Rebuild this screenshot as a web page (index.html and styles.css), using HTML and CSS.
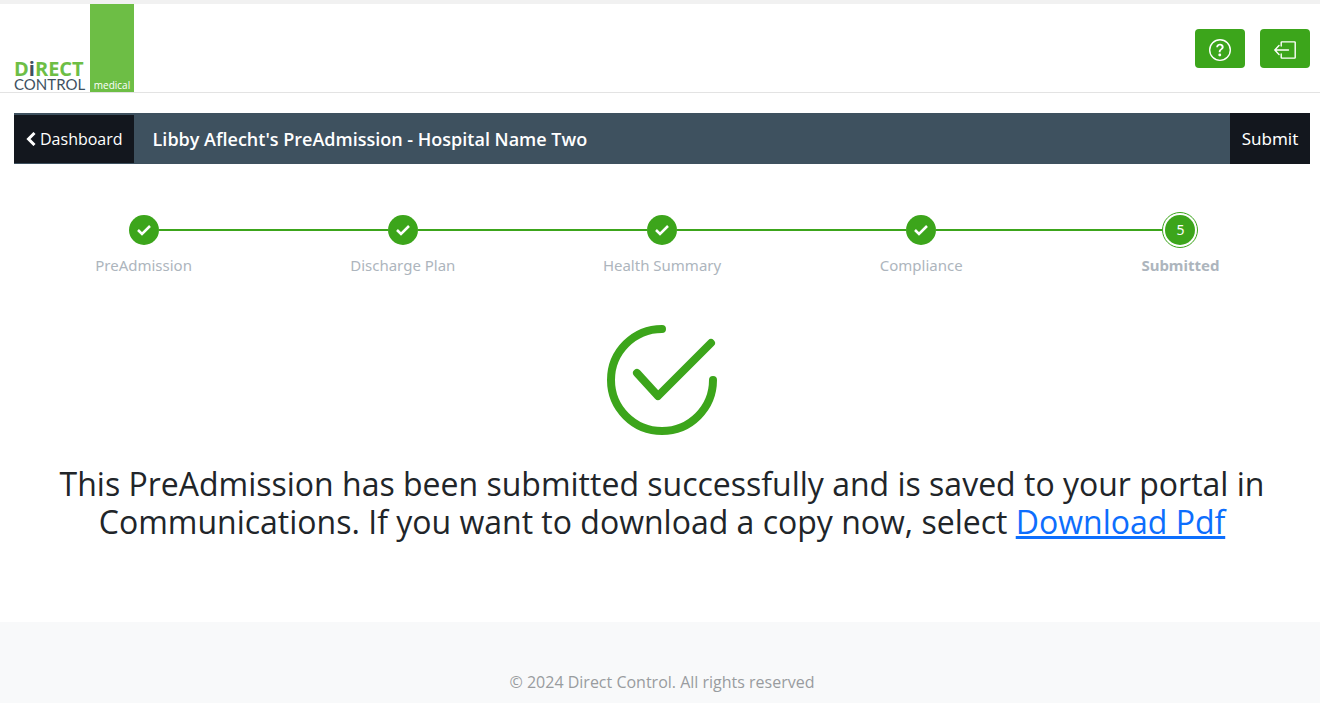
FILE: index.html
```html
<!DOCTYPE html>
<html lang="en">
<head>
    <meta charset="UTF-8">
    <meta name="viewport" content="width=device-width, initial-scale=1.0">
    <title>PreAdmission - Submitted</title>
    <link rel="stylesheet" href="styles.css">
</head>
<body>

    <header class="site-header">
        <a class="logo" href="#">
            <span class="logo-name">
                <span class="logo-direct">D<span class="logo-i">i</span>RECT</span>
                <span class="logo-control">CONTROL</span>
            </span>
            <span class="logo-block">medical</span>
        </a>
        <div class="header-actions">
            <button type="button" class="icon-btn" aria-label="Help">
                <svg width="22" height="22" viewBox="0 0 16 16" fill="currentColor">
                    <path d="M8 15A7 7 0 1 1 8 1a7 7 0 0 1 0 14m0 1A8 8 0 1 0 8 0a8 8 0 0 0 0 16"/>
                    <path d="M5.255 5.786a.237.237 0 0 0 .241.247h.825c.138 0 .248-.113.266-.25.09-.656.54-1.134 1.342-1.134.686 0 1.314.343 1.314 1.168 0 .635-.374.927-.965 1.371-.673.489-1.206 1.06-1.168 1.987l.003.217a.25.25 0 0 0 .25.246h.811a.25.25 0 0 0 .25-.25v-.105c0-.718.273-.927 1.01-1.486.609-.463 1.244-.977 1.244-2.056 0-1.511-1.276-2.241-2.673-2.241-1.267 0-2.655.59-2.75 2.286m1.557 5.763c0 .533.425.927 1.01.927.609 0 1.028-.394 1.028-.927 0-.552-.42-.94-1.029-.94-.584 0-1.009.388-1.009.94"/>
                </svg>
            </button>
            <button type="button" class="icon-btn" aria-label="Log out">
                <svg width="22" height="22" viewBox="0 0 22 22" fill="none" stroke="currentColor" stroke-width="1.4" stroke-linecap="round" stroke-linejoin="round">
                    <path d="M7.200 7V3.500a.6.6 0 0 1 .6-.6h12.800a.6.6 0 0 1 .6.6v15a.6.6 0 0 1-.6.6H7.800a.6.6 0 0 1-.6-.6V15"/>
                    <path d="M14.500 11H.8M5 6.600.8 11 5 15.400"/>
                </svg>
            </button>
        </div>
    </header>

    <main class="content">
        <div class="title-bar">
            <a class="back-link" href="#">
                <svg width="10" height="14" viewBox="0 0 10 14" fill="none" stroke="currentColor" stroke-width="3">
                    <path d="M8.500 1 2.500 7l6 6"/>
                </svg>
                Dashboard
            </a>
            <h1 class="title">Libby Aflecht's PreAdmission - Hospital Name Two</h1>
            <button type="button" class="submit-btn">Submit</button>
        </div>

        <ol class="steps">
            <li class="step">
                <span class="marker">
                    <span class="dot"><svg width="16" height="12" viewBox="0 0 16 12"><path d="M2 6l4 4 8-8"/></svg></span>
                </span>
                <span class="step-label">PreAdmission</span>
            </li>
            <li class="step">
                <span class="marker">
                    <span class="dot"><svg width="16" height="12" viewBox="0 0 16 12"><path d="M2 6l4 4 8-8"/></svg></span>
                </span>
                <span class="step-label">Discharge Plan</span>
            </li>
            <li class="step">
                <span class="marker">
                    <span class="dot"><svg width="16" height="12" viewBox="0 0 16 12"><path d="M2 6l4 4 8-8"/></svg></span>
                </span>
                <span class="step-label">Health Summary</span>
            </li>
            <li class="step">
                <span class="marker">
                    <span class="dot"><svg width="16" height="12" viewBox="0 0 16 12"><path d="M2 6l4 4 8-8"/></svg></span>
                </span>
                <span class="step-label">Compliance</span>
            </li>
            <li class="step current" aria-current="step">
                <span class="marker">
                    <span class="dot">5</span>
                </span>
                <span class="step-label">Submitted</span>
            </li>
        </ol>

        <section class="result">
            <svg class="result-icon" width="110" height="110" viewBox="0 0 110 110" fill="none" stroke="currentColor" stroke-width="8" stroke-linecap="round" stroke-linejoin="round">
                <path d="M55 4A51 51 0 1 0 106 55"/>
                <path d="M30 48 51 71 104 18"/>
            </svg>
            <h2 class="message">This PreAdmission has been submitted successfully and is saved to your portal in Communications. If you want to download a copy now, select <a href="#">Download Pdf</a></h2>
        </section>
    </main>

    <footer class="site-footer">
        <p>© 2024 Direct Control. All rights reserved</p>
    </footer>

</body>
</html>
```
FILE: styles.css
```css
:root {
    --green: #3ca51b;
    --slate: #3e515f;
    --dark: #13171e;
}

* {
    box-sizing: border-box;
}

body {
    margin: 0;
    min-height: 100vh;
    display: flex;
    flex-direction: column;
    border-top: 4px solid #f1f1f1;
    background: #fff;
    color: #212529;
    font-family: "Open Sans", "Noto Sans", sans-serif;
    font-size: 16px;
    line-height: 24px;
}

/* Header */
.site-header {
    display: flex;
    justify-content: space-between;
    align-items: center;
    padding: 0 10px 0 14px;
    border-bottom: 1px solid #e3e3e3;
}
.logo {
    display: flex;
    gap: 5px;
    height: 88px;
    text-decoration: none;
}
.logo-name {
    display: flex;
    flex-direction: column;
    justify-content: flex-end;
    width: 71px;
    color: var(--slate);
}
.logo-direct {
    color: #6dbe45;
    font-size: 20px;
    font-weight: 700;
    line-height: 16px;
}
.logo-i {
    color: var(--slate);
}
.logo-control {
    font-family: Lato, sans-serif;
    font-size: 15px;
    line-height: 15px;
}
.logo-block {
    display: flex;
    justify-content: center;
    align-items: flex-end;
    width: 44px;
    background: #6dbe45;
    color: #fff;
    font-size: 10px;
    line-height: 13px;
}
.header-actions {
    display: flex;
    gap: 15px;
}
.icon-btn {
    display: flex;
    justify-content: center;
    align-items: center;
    width: 50px;
    height: 39px;
    padding: 3px 0 0;
    border: 0;
    border-radius: 4px;
    background: var(--green);
    color: #fff;
    cursor: pointer;
}

/* Title bar */
.content {
    flex: 1;
    padding: 20px 10px 80px 14px;
}
.title-bar {
    display: flex;
    align-items: stretch;
    min-height: 51px;
    background: var(--slate);
    color: #fff;
}
.back-link {
    display: flex;
    align-items: center;
    gap: 4px;
    margin: 2px 0 1px;
    padding: 0 11px 0 12px;
    background: var(--dark);
    color: #fff;
    font-size: 16px;
    text-decoration: none;
}
.title {
    flex: 1;
    align-self: center;
    margin: 0;
    padding: 0 19px;
    font-size: 18px;
    font-weight: 600;
}
.submit-btn {
    width: 80px;
    padding: 0;
    border: 0;
    background: var(--dark);
    color: #fff;
    font-family: "Noto Sans", sans-serif;
    font-size: 17px;
    cursor: pointer;
}

/* Steps */
.steps {
    display: flex;
    margin: 48px 0 0;
    padding: 0;
    list-style: none;
    font-family: "Noto Sans", sans-serif;
}
.step {
    flex: 1;
    text-align: center;
}
.marker {
    display: flex;
    align-items: center;
    height: 36px;
}
.marker::before,
.marker::after {
    content: "";
    flex: 1;
    height: 2px;
    background: var(--green);
}
.step:first-child .marker::before,
.step:last-child .marker::after {
    background: none;
}
.dot {
    display: flex;
    justify-content: center;
    align-items: center;
    width: 30px;
    height: 30px;
    border-radius: 50%;
    background: var(--green);
    color: #fff;
    font-size: 14px;
}
.dot path {
    fill: none;
    stroke: #fff;
    stroke-width: 2.5;
}
.step-label {
    display: block;
    margin-top: 5px;
    color: #adb5bd;
    font-size: 15px;
}
.current .dot {
    width: 36px;
    height: 36px;
    border: 1px solid var(--green);
    padding: 2px;
    background-clip: content-box;
}
.current .step-label {
    font-weight: 700;
}

/* Result */
.result {
    margin-top: 48px;
    text-align: center;
}
.result-icon {
    display: block;
    margin: 0 auto;
    color: var(--green);
}
.message {
    margin: 30px 0 0;
    padding: 0 40px;
    font-size: 32px;
    font-weight: 400;
    line-height: 38px;
}
.message a {
    color: #0d6efd;
}

/* Footer */
.site-footer {
    padding: 48px 10px 9px 14px;
    background: #f8f9fa;
    color: #999c9f;
    text-align: center;
}
.site-footer p {
    margin: 0;
}
```
